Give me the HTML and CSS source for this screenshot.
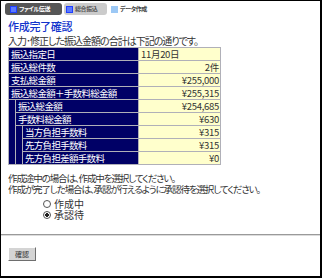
FILE: index.html
```html
<!DOCTYPE html>
<html lang="ja">
<head>
    <meta charset="UTF-8">
    <title>作成完了確認</title>
    <link rel="stylesheet" href="styles.css">
</head>
<body>
    <div class="page">
        <div class="tabs">
            <div class="tab tab-active"><span class="tab-mark"></span>ファイル伝送</div>
            <div class="tab tab-sub"><span class="tab-mark"></span>総合振込</div>
            <div class="tab tab-plain"><span class="tab-mark"></span>データ作成</div>
        </div>

        <h1 class="title">作成完了確認</h1>
        <p class="intro">入力･修正した振込金額の合計は下記の通りです。</p>

        <table class="summary">
            <tr>
                <th colspan="3">振込指定日</th>
                <td class="left">11月20日</td>
            </tr>
            <tr>
                <th colspan="3">振込総件数</th>
                <td>2件</td>
            </tr>
            <tr>
                <th colspan="3">支払総金額</th>
                <td>¥255,000</td>
            </tr>
            <tr>
                <th colspan="3">振込総金額＋手数料総金額</th>
                <td>¥255,315</td>
            </tr>
            <tr>
                <th class="indent1" rowspan="5"></th>
                <th colspan="2">振込総金額</th>
                <td>¥254,685</td>
            </tr>
            <tr>
                <th colspan="2">手数料総金額</th>
                <td>¥630</td>
            </tr>
            <tr>
                <th class="indent2" rowspan="3"></th>
                <th>当方負担手数料</th>
                <td>¥315</td>
            </tr>
            <tr>
                <th>先方負担手数料</th>
                <td>¥315</td>
            </tr>
            <tr>
                <th>先方負担差額手数料</th>
                <td>¥0</td>
            </tr>
        </table>

        <p class="note">作成途中の場合は、作成中を選択してください。<br>作成が完了した場合は、承認が行えるように承認待を選択してください。</p>

        <div class="choices">
            <label class="choice"><input type="radio" name="status" value="draft">作成中</label>
            <label class="choice"><input type="radio" name="status" value="wait" checked>承認待</label>
        </div>

        <hr class="rule">

        <div class="actions">
            <button class="btn">確認</button>
        </div>
    </div>
</body>
</html>
```

FILE: styles.css
```css
html, body {
    margin: 0;
    padding: 0;
    background-color: #ffffff;
}

body {
    font-family: "Noto Sans CJK JP", "DejaVu Sans", sans-serif;
    font-feature-settings: "palt";
    color: #333333;
}

.page {
    width: 322px;
    height: 278px;
    box-sizing: border-box;
    border: 1px solid #000;
    border-right-width: 2px;
    border-bottom-width: 2px;
    padding-top: 2px;
}

.tabs {
    display: flex;
    align-items: center;
    gap: 2px;
    padding-left: 4px;
    height: 12px;
}

.tab {
    display: flex;
    align-items: center;
    gap: 2px;
    height: 12px;
    padding: 0 5px;
    border-radius: 3px;
    font-size: 6px;
    font-weight: bold;
    line-height: 12px;
    letter-spacing: -0.4px;
    white-space: nowrap;
}

.tab-mark {
    display: inline-block;
    width: 5px;
    height: 5px;
    border: 1px solid #1f3fff;
    background-color: #5a78ff;
}

.tab-active {
    width: 57px;
    box-sizing: border-box;
    background-color: #565656;
    color: #ffffff;
}

.tab-sub {
    width: 43px;
    box-sizing: border-box;
    padding-left: 2px;
    background-color: #cbcbcb;
    color: #555555;
}

.tab-plain {
    padding-left: 2px;
    color: #444444;
}

.tab-plain .tab-mark {
    border-color: #9cc8f5;
    background-color: #9cc8f5;
}

.title {
    margin: 4px 0 0 7px;
    font-size: 11px;
    line-height: 14px;
    font-weight: 500;
    color: #1133cc;
    letter-spacing: -0.3px;
}

.intro {
    margin: 2px 0 0 7px;
    font-size: 10px;
    line-height: 12px;
    letter-spacing: -1px;
}

.summary {
    margin: 0 0 0 7px;
    width: 213px;
    border-collapse: separate;
    border-spacing: 1px;
    background-color: #b0b0b8;
    font-size: 9.5px;
    line-height: 12px;
}

.summary th,
.summary td {
    height: 12px;
    padding: 0 1px 0 2px;
    white-space: nowrap;
}

.summary th {
    background-color: #000066;
    color: #ffffff;
    font-weight: normal;
    text-align: left;
    letter-spacing: -0.7px;
}

.summary td {
    width: 78px;
    background-color: #ffffcc;
    color: #333333;
    text-align: right;
    letter-spacing: -0.3px;
}

.summary td.left {
    text-align: left;
}

.summary .indent1,
.summary .indent2 {
    width: 6px;
    padding: 0;
}

.note {
    margin: 8px 0 0 7px;
    font-size: 9.5px;
    line-height: 11px;
    letter-spacing: -1.1px;
}

.choices {
    display: flex;
    flex-direction: column;
    margin: 3px 0 0 42px;
}

.choice {
    display: flex;
    align-items: center;
    gap: 3px;
    height: 11px;
    font-size: 10px;
    line-height: 11px;
}

.choice input {
    -webkit-appearance: none;
    appearance: none;
    margin: 0;
    width: 8px;
    height: 8px;
    border: 1px solid #555;
    border-radius: 50%;
    box-sizing: border-box;
    background-color: #fff;
}

.choice input:checked {
    background: radial-gradient(circle, #222 0 1.6px, #fff 2px);
}

.rule {
    margin: 14px 0 0 0;
    height: 0;
    border: none;
    border-top: 1px solid #9a9a9a;
    border-bottom: 1px solid #dcdcdc;
}

.actions {
    padding: 11px 0 0 7px;
}

.btn {
    display: block;
    height: 14px;
    width: 28px;
    padding: 0;
    font-family: inherit;
    font-size: 7px;
    line-height: 12px;
    color: #333;
    background-color: #d4d4d4;
    border: 1px solid;
    border-color: #ffffff #6e6e6e #6e6e6e #ffffff;
}
```
